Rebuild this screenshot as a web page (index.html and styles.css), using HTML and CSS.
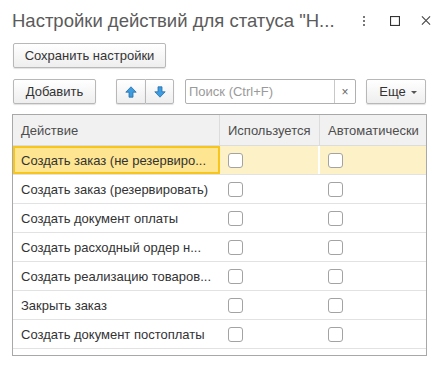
FILE: index.html
```html
<!DOCTYPE html>
<html lang="ru">
<head>
    <meta charset="UTF-8">
    <title>Настройки действий</title>
    <link rel="stylesheet" href="styles.css">
</head>
<body>
    <div class="window">
        <div class="title-bar">
            <div class="title">Настройки действий для статуса "Н...</div>
            <div class="title-icons">
                <span class="icon-dots">
                    <svg width="4" height="10" viewBox="0 0 4 10"><rect x="1" y="0" width="2" height="2" fill="#777"/><rect x="1" y="4" width="2" height="2" fill="#777"/><rect x="1" y="8" width="2" height="2" fill="#777"/></svg>
                </span>
                <span class="icon-max">
                    <svg width="10" height="10" viewBox="0 0 10 10"><rect x="0.5" y="0.5" width="9" height="9" fill="none" stroke="#333" stroke-width="1.2"/></svg>
                </span>
                <span class="icon-close">
                    <svg width="11" height="11" viewBox="0 0 11 11"><path d="M1 1 L10 10 M10 1 L1 10" stroke="#444" stroke-width="1.2"/></svg>
                </span>
            </div>
        </div>

        <div class="toolbar">
            <button class="btn btn-save">Сохранить настройки</button>
        </div>

        <div class="toolbar toolbar-list">
            <button class="btn btn-add">Добавить</button>
            <div class="btn-group">
                <button class="btn btn-arrow">
                    <svg width="12" height="12" viewBox="0 0 12 12"><path d="M6 0.8 L11.2 6.2 L8 6.2 L8 11.2 L4 11.2 L4 6.2 L0.8 6.2 Z" fill="#3d9be0" stroke="#2a6fa8" stroke-width="0.8"/></svg>
                </button>
                <button class="btn btn-arrow">
                    <svg width="12" height="12" viewBox="0 0 12 12"><path d="M6 11.2 L11.2 5.8 L8 5.8 L8 0.8 L4 0.8 L4 5.8 L0.8 5.8 Z" fill="#3d9be0" stroke="#2a6fa8" stroke-width="0.8"/></svg>
                </button>
            </div>
            <div class="search">
                <span class="search-text">Поиск (Ctrl+F)</span>
                <span class="search-clear">×</span>
            </div>
            <button class="btn btn-more">Еще <span class="caret"></span></button>
        </div>

        <div class="table">
            <div class="row header">
                <div class="cell col-action">Действие</div>
                <div class="cell col-used">Используется</div>
                <div class="cell col-auto">Автоматически</div>
            </div>
            <div class="row selected">
                <div class="cell col-action current">Создать заказ (не резервиро...</div>
                <div class="cell col-used"><span class="check"></span></div>
                <div class="cell col-auto"><span class="check"></span></div>
            </div>
            <div class="row">
                <div class="cell col-action">Создать заказ (резервировать)</div>
                <div class="cell col-used"><span class="check"></span></div>
                <div class="cell col-auto"><span class="check"></span></div>
            </div>
            <div class="row">
                <div class="cell col-action">Создать документ оплаты</div>
                <div class="cell col-used"><span class="check"></span></div>
                <div class="cell col-auto"><span class="check"></span></div>
            </div>
            <div class="row">
                <div class="cell col-action">Создать расходный ордер н...</div>
                <div class="cell col-used"><span class="check"></span></div>
                <div class="cell col-auto"><span class="check"></span></div>
            </div>
            <div class="row">
                <div class="cell col-action">Создать реализацию товаров...</div>
                <div class="cell col-used"><span class="check"></span></div>
                <div class="cell col-auto"><span class="check"></span></div>
            </div>
            <div class="row">
                <div class="cell col-action">Закрыть заказ</div>
                <div class="cell col-used"><span class="check"></span></div>
                <div class="cell col-auto"><span class="check"></span></div>
            </div>
            <div class="row">
                <div class="cell col-action">Создать документ постоплаты</div>
                <div class="cell col-used"><span class="check"></span></div>
                <div class="cell col-auto"><span class="check"></span></div>
            </div>
        </div>
    </div>
</body>
</html>
```

FILE: styles.css
```css
* {
    margin: 0;
    padding: 0;
    box-sizing: border-box;
    font-family: 'Liberation Sans', Arial, sans-serif;
}

body {
    background-color: #fff;
    color: #333;
}

.window {
    width: 446px;
    height: 369px;
    padding: 0 19px 0 12px;
}

/* Title bar */
.title-bar {
    display: flex;
    align-items: center;
    justify-content: space-between;
    height: 40px;
    padding-top: 1px;
}

.title {
    font-size: 18.5px;
    color: #5b5b5b;
    white-space: nowrap;
}

.title-icons {
    display: flex;
    align-items: center;
    gap: 21px;
    margin-right: -4px;
}

.title-icons span {
    display: flex;
    align-items: center;
    justify-content: center;
    width: 10px;
}

/* Buttons */
.toolbar {
    display: flex;
    align-items: center;
    padding-left: 1px;
    margin-top: 3px;
}

.toolbar-list {
    margin-top: 11px;
}

.btn {
    height: 25px;
    border: 1px solid #b8b8b8;
    border-radius: 2px;
    background: linear-gradient(#ffffff, #eeeeee);
    box-shadow: 0 1px 1px rgba(0, 0, 0, 0.12);
    font-size: 13px;
    color: #333;
    display: flex;
    align-items: center;
    justify-content: center;
}

.btn-save {
    width: 153px;
}

.btn-add {
    width: 83px;
}

.btn-group {
    display: flex;
    margin-left: 20px;
}

.btn-arrow {
    width: 29px;
    border-radius: 0;
}

.btn-arrow:first-child {
    border-radius: 2px 0 0 2px;
    border-right: none;
}

.btn-arrow:last-child {
    border-radius: 0 2px 2px 0;
}

.search {
    display: flex;
    align-items: center;
    width: 171px;
    height: 25px;
    margin-left: 11px;
    border: 1px solid #b0b0b0;
    border-radius: 2px;
}

.search-text {
    flex: 1;
    font-size: 13px;
    color: #9a9a9a;
    padding-left: 3px;
}

.search-clear {
    width: 21px;
    height: 100%;
    border-left: 1px solid #c8c8c8;
    font-size: 12px;
    color: #666;
    display: flex;
    align-items: center;
    justify-content: center;
}

.btn-more {
    width: 60px;
    margin-left: 10px;
    gap: 5px;
    padding-left: 4px;
}

.caret {
    width: 0;
    height: 0;
    border-left: 3px solid transparent;
    border-right: 3px solid transparent;
    border-top: 3px solid #555;
    margin-top: 1px;
}

/* Table */
.table {
    margin-top: 10px;
    width: 415px;
    height: 242px;
    border: 1px solid #a8a8a8;
}

.row {
    display: flex;
    height: 29px;
    border-bottom: 1px solid #e2e2e2;
}

.row.header {
    height: 31px;
    background-color: #f1f1f1;
    border-bottom: 1px solid #dcdcdc;
}

.cell {
    display: flex;
    align-items: center;
    font-size: 13px;
    color: #333;
    white-space: nowrap;
    overflow: hidden;
}

.header .cell {
    color: #4d4d4d;
    border-right: 1px solid #dcdcdc;
}

.header .cell:last-child {
    border-right: none;
}

.col-action {
    width: 207px;
    padding-left: 8px;
}

.col-used {
    width: 100px;
    padding-left: 8px;
}

.col-auto {
    flex: 1;
    padding-left: 8px;
}

.selected {
    background-color: #fdf1c8;
}

.selected .cell {
    border-right: 2px solid #fff;
}

.selected .cell:last-child {
    border-right: none;
}

.selected .current {
    background-color: #fde591;
    border: 2px solid #f7c51c;
    padding-left: 6px;
}

.check {
    width: 15px;
    height: 15px;
    border: 1px solid #a3a3a3;
    border-radius: 3px;
    background-color: #fff;
}
```
